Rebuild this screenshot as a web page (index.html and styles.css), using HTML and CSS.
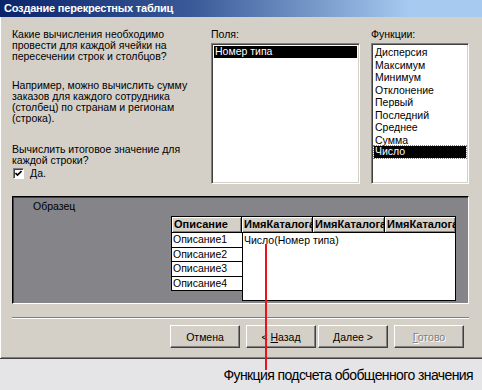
FILE: index.html
```html
<!DOCTYPE html>
<html lang="ru">
<head>
    <meta charset="UTF-8">
    <title>Создание перекрестных таблиц</title>
    <link rel="stylesheet" href="styles.css">
</head>
<body>
    <div class="dialog">
        <div class="titlebar">Создание перекрестных таблиц</div>
        <div class="content">
            <div class="top">
                <div class="intro">
                    <p>Какие вычисления необходимо<br>провести для каждой ячейки на<br>пересечении строк и столбцов?</p>
                    <p class="gap-1">Например, можно вычислить сумму<br>заказов для каждого сотрудника<br>(столбец) по странам и регионам<br>(строка).</p>
                    <p class="gap-2">Вычислить итоговое значение для<br>каждой строки?</p>
                    <div class="check">
                        <span class="check-box">
                            <svg width="7" height="7" viewBox="0 0 7 7"><polyline points="0.5,3 2.5,5 6.5,1" fill="none" stroke="#000" stroke-width="1.6"/></svg>
                        </span>
                        <span><u>Д</u>а.</span>
                    </div>
                </div>
                <div class="field-col">
                    <div class="label">Поля:</div>
                    <div class="listbox">
                        <div class="item selected">Номер типа</div>
                    </div>
                </div>
                <div class="field-col">
                    <div class="label">Функции:</div>
                    <div class="listbox">
                        <div class="item">Дисперсия</div>
                        <div class="item">Максимум</div>
                        <div class="item">Минимум</div>
                        <div class="item">Отклонение</div>
                        <div class="item">Первый</div>
                        <div class="item">Последний</div>
                        <div class="item">Среднее</div>
                        <div class="item">Сумма</div>
                        <div class="item selected focused">Число</div>
                    </div>
                </div>
            </div>

            <div class="sample">
                <div class="sample-title">Образец</div>
                <div class="sheet">
                    <div class="thead">
                        <div class="th th-desc">Описание</div>
                        <div class="th">ИмяКаталога</div>
                        <div class="th th-wide">ИмяКаталога</div>
                        <div class="th">ИмяКаталога</div>
                    </div>
                    <div class="tbody">
                        <div class="rows">
                            <div class="row">Описание1</div>
                            <div class="row">Описание2</div>
                            <div class="row">Описание3</div>
                            <div class="row">Описание4</div>
                        </div>
                        <div class="cells">Число(Номер типа)</div>
                    </div>
                </div>
            </div>

            <div class="separator"></div>

            <div class="buttons">
                <button class="btn">Отмена</button>
                <button class="btn btn-back">&lt; <u>Н</u>азад</button>
                <button class="btn btn-next"><u>Д</u>алее &gt;</button>
                <button class="btn btn-finish" disabled><u>Г</u>отово</button>
            </div>
        </div>
    </div>

    <div class="caption">Функция подсчета обобщенного значения</div>
    <div class="pointer"></div>
</body>
</html>
```

FILE: styles.css
```css
body {
    margin: 0;
    width: 482px;
    height: 390px;
    overflow: hidden;
    position: relative;
    background-color: #e5e5e8;
    font-family: "Liberation Sans", Arial, sans-serif;
    font-size: 10.5px;
    line-height: 11px;
    color: #000;
}

.dialog {
    height: 359px;
    box-sizing: border-box;
    background-color: #d4d0c8;
    border-bottom: 1px solid #404040;
    box-shadow: inset 1px 0 #fff, inset 0 -1px #808080;
}

.titlebar {
    height: 17px;
    padding-left: 4px;
    background: linear-gradient(90deg, #0a246a, #3a5a98 40%, #a6caf0 85%);
    color: #fff;
    font-size: 11px;
    font-weight: bold;
    line-height: 17px;
    letter-spacing: -0.2px;
    white-space: nowrap;
}

.content {
    padding: 12px 13px 0 12px;
}

.top {
    display: grid;
    grid-template-columns: 188px 149px 98px;
    column-gap: 11px;
    height: 155px;
}

.intro p {
    margin: 0;
}

.intro .gap-1 {
    margin-top: 18px;
}

.intro .gap-2 {
    margin-top: 20px;
}

.check {
    display: flex;
    align-items: center;
    gap: 6px;
    margin-top: 2px;
    padding-left: 1px;
}

.check-box {
    width: 11px;
    height: 11px;
    box-sizing: border-box;
    display: flex;
    align-items: center;
    justify-content: center;
    background: #fff;
    border: 1px solid;
    border-color: #808080 #fff #fff #808080;
    box-shadow: inset 1px 1px #404040;
}

.field-col .label {
    height: 11px;
}

.listbox {
    margin-top: 3px;
    height: 141px;
    box-sizing: border-box;
    padding: 2px 2px 0 2px;
    background: #fff;
    border: 1px solid;
    border-color: #808080 #fff #fff #808080;
    box-shadow: inset 1px 1px #404040, inset -1px -1px #d4d0c8;
    overflow: hidden;
}

.listbox .item {
    height: 12.5px;
    line-height: 12px;
    padding-left: 1px;
    white-space: nowrap;
}

.listbox .selected {
    background: #000;
    color: #fff;
    height: 11.5px;
    line-height: 11px;
}

.listbox .focused {
    outline: 1px dotted #808080;
}

.sample {
    margin-top: 12px;
    height: 108px;
    box-sizing: border-box;
    padding: 4px 0 0 20px;
    background-color: #858488;
    border: 1px solid;
    border-color: #000 #fff #fff #000;
    box-shadow: inset 1px 1px #404040;
}

.sample-title {
    height: 11px;
}

.sheet {
    margin-top: 4px;
    margin-left: 138px;
    width: 285px;
}

.thead {
    display: flex;
    border-top: 1px solid #000;
    border-left: 1px solid #000;
}

.th {
    width: 71px;
    height: 15px;
    box-sizing: border-box;
    padding-left: 2px;
    background: #d4d0c8;
    border-right: 1px solid #000;
    box-shadow: inset 1px 1px #fff, inset -1px -1px #808080;
    font-size: 11px;
    font-weight: bold;
    line-height: 15px;
    white-space: nowrap;
    overflow: hidden;
}

.th-desc {
    width: 70px;
}

.th-wide {
    width: 72px;
}

.tbody {
    display: flex;
    border-top: 1px solid #000;
}

.rows {
    width: 71px;
}

.row {
    height: 14.5px;
    box-sizing: border-box;
    padding-left: 1px;
    background: #fff;
    border-left: 1px solid #000;
    border-bottom: 1px solid #000;
    line-height: 13px;
    white-space: nowrap;
}

.cells {
    width: 214px;
    height: 68px;
    box-sizing: border-box;
    padding: 2px 0 0 1px;
    background: #fff;
    border: 1px solid #000;
    border-top: none;
    white-space: nowrap;
}

.separator {
    margin-top: 13px;
    height: 1px;
    background: #808080;
    border-bottom: 1px solid #fff;
}

.buttons {
    display: flex;
    justify-content: flex-end;
    margin-top: 6px;
    padding-right: 5px;
}

.btn {
    width: 70px;
    height: 23px;
    box-sizing: border-box;
    padding: 0;
    background: #d4d0c8;
    border: 1px solid;
    border-color: #fff #404040 #404040 #fff;
    box-shadow: inset -1px -1px #808080;
    font-family: "Liberation Sans", Arial, sans-serif;
    font-size: 10.5px;
    color: #000;
}

.btn-back {
    margin-left: 6px;
}

.btn-next {
    margin-left: 2px;
}

.btn-finish {
    margin-left: 6px;
    color: #808080;
    text-shadow: 1px 1px #fff;
}

.caption {
    padding: 9px 9px 0 0;
    text-align: right;
    font-family: "Liberation Sans", Arial, sans-serif;
    font-size: 14px;
    line-height: 15px;
    letter-spacing: -0.6px;
    white-space: nowrap;
}

/* annotation line pointing at the sample formula */
.pointer {
    position: absolute;
    left: 265px;
    top: 244px;
    width: 2px;
    height: 126px;
    background: #e8141c;
}
```
